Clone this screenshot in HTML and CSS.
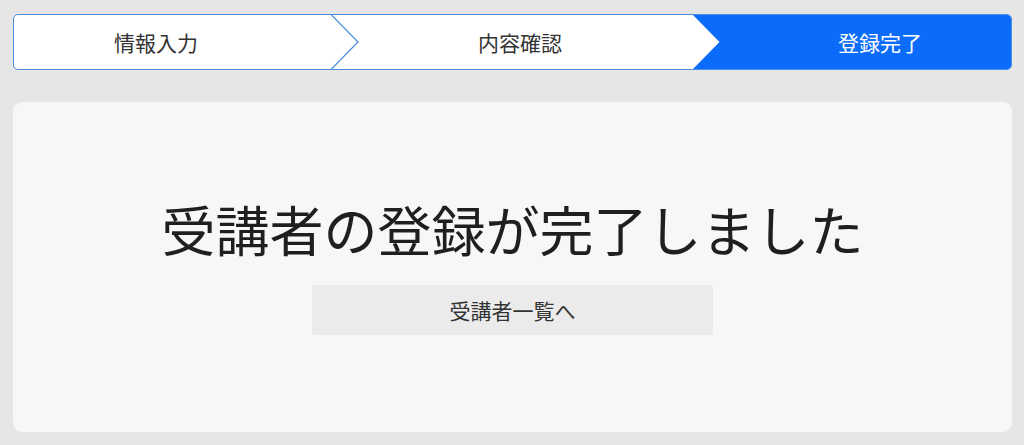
FILE: index.html
```html
<!DOCTYPE html>
<html lang="ja">
<head>
<meta charset="utf-8">
<title>登録完了</title>
<link rel="stylesheet" href="styles.css">
</head>
<body>
<div class="page">
  <div class="stepper">
    <div class="step step-first">
      <span>情報入力</span>
      <svg class="chevron" width="28" height="54" viewBox="0 0 28 54"><polyline points="0.5,0 27,27 0.5,54" fill="none" stroke="#4a8fdc" stroke-width="1.2"/></svg>
    </div>
    <div class="step step-second">
      <span>内容確認</span>
      <svg class="arrow" width="27" height="54" viewBox="0 0 27 54"><polygon points="0,0 26.5,27 0,54" fill="#ffffff"/></svg>
    </div>
    <div class="step step-active">
      <span>登録完了</span>
    </div>
  </div>
  <div class="card">
    <h1 class="title">受講者の登録が完了しました</h1>
    <button class="back-btn" type="button">受講者一覧へ</button>
  </div>
</div>
</body>
</html>
```

FILE: styles.css
```css
html, body {
  margin: 0;
  padding: 0;
}
body {
  background: #e6e6e6;
  font-family: "Noto Sans CJK JP", "Noto Sans", sans-serif;
  color: #333;
}
.page {
  padding: 14px 12px 0 13px;
}
.stepper {
  display: flex;
  height: 54px;
  border: 1px solid #4a8fdc;
  border-radius: 5px;
  background: #ffffff;
  overflow: hidden;
}
.step {
  position: relative;
  display: flex;
  align-items: center;
  justify-content: center;
  font-size: 21px;
  color: #333;
}
.step span {
  line-height: 1;
}
.step-first {
  width: 317px;
  padding-right: 33px;
  box-sizing: border-box;
}
.step-second {
  width: 362px;
  padding-left: 16px;
  box-sizing: border-box;
}
.step-active {
  flex: 1;
  background: #0b6cfb;
  color: #ffffff;
  padding-left: 56px;
}
.chevron,
.arrow {
  position: absolute;
  top: 0;
  left: 100%;
  z-index: 2;
  display: block;
}
.card {
  margin-top: 32px;
  height: 330px;
  background: #f7f7f7;
  border-radius: 9px;
  display: flex;
  flex-direction: column;
  align-items: center;
  padding-top: 95px;
  box-sizing: border-box;
}
.title {
  margin: 0;
  font-size: 54px;
  font-weight: 400;
  line-height: 64px;
  color: #1f1f1f;
}
.back-btn {
  margin-top: 24px;
  width: 401px;
  height: 50px;
  border: none;
  border-radius: 3px;
  background: #ebebeb;
  font-family: "Noto Sans CJK JP", "Noto Sans", sans-serif;
  font-size: 21px;
  color: #333;
  padding: 0;
}
```
